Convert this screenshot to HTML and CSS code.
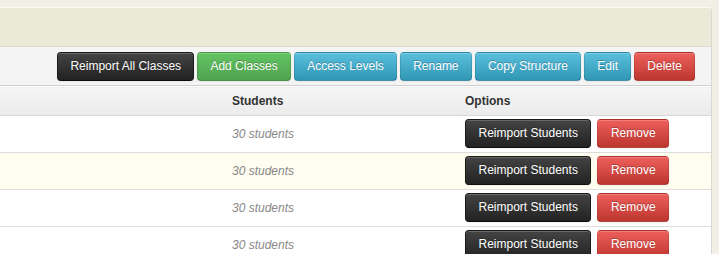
FILE: index.html
```html
<!DOCTYPE html>
<html>
<head>
<meta charset="utf-8">
<link rel="stylesheet" href="styles.css">
</head>
<body>
<div class="panel">
  <div class="panel-heading"></div>
  <div class="toolbar">
    <button class="btn btn-inverse">Reimport All Classes</button>
    <button class="btn btn-success">Add Classes</button>
    <button class="btn btn-info">Access Levels</button>
    <button class="btn btn-info">Rename</button>
    <button class="btn btn-info">Copy Structure</button>
    <button class="btn btn-info">Edit</button>
    <button class="btn btn-danger">Delete</button>
  </div>
  <table class="classes">
    <colgroup><col class="c1"><col class="c2"><col class="c3"></colgroup>
    <thead>
      <tr><th></th><th>Students</th><th>Options</th></tr>
    </thead>
    <tbody>
      <tr><td></td><td class="count">30 students</td><td><div class="opts"><button class="btn btn-inverse">Reimport Students</button><button class="btn btn-danger">Remove</button></div></td></tr>
      <tr class="hl"><td></td><td class="count">30 students</td><td><div class="opts"><button class="btn btn-inverse">Reimport Students</button><button class="btn btn-danger">Remove</button></div></td></tr>
      <tr><td></td><td class="count">30 students</td><td><div class="opts"><button class="btn btn-inverse">Reimport Students</button><button class="btn btn-danger">Remove</button></div></td></tr>
      <tr><td></td><td class="count">30 students</td><td><div class="opts"><button class="btn btn-inverse">Reimport Students</button><button class="btn btn-danger">Remove</button></div></td></tr>
    </tbody>
  </table>
</div>
</body>
</html>
```
FILE: styles.css
```css
html, body {
  margin: 0;
  padding: 0;
}
body {
  background: #f1efe6;
  font-family: "Liberation Sans", Arial, sans-serif;
  font-size: 12px;
  color: #333;
  padding-top: 7px;
  overflow: hidden;
  height: 254px;
  box-sizing: border-box;
}
.panel {
  width: 711px;
  background: #fff;
  border-top: 1px solid #fbfaf4;
  border-right: 1px solid #d9d9d2;
  border-top-right-radius: 4px;
  overflow: hidden;
}
.panel-heading {
  height: 38px;
  background: #ebe9d8;
  border-bottom: 1px solid #dcdbcc;
}
.toolbar {
  background: #f4f4f4;
  height: 39px;
  box-sizing: border-box;
  padding: 5px 16px 5px 0;
  text-align: right;
  border-bottom: 1px solid #cfcfcf;
  font-size: 12px;
}
.btn {
  display: inline-block;
  font-family: "Liberation Sans", Arial, sans-serif;
  font-size: 12px;
  line-height: 19px;
  height: 29px;
  box-sizing: border-box;
  padding: 4px 12px;
  margin: 0;
  color: #fff;
  text-shadow: 0 -1px 0 rgba(0,0,0,0.25);
  border: 1px solid rgba(0,0,0,0.1);
  border-bottom-color: rgba(0,0,0,0.25);
  border-radius: 4px;
  box-shadow: inset 0 1px 0 rgba(255,255,255,0.2), 0 1px 2px rgba(0,0,0,0.05);
  vertical-align: top;
}
.btn-inverse {
  background: linear-gradient(#444444, #222222);
  border-color: #1a1a1a #1a1a1a #0d0d0d;
}
.btn-success {
  background: linear-gradient(#62c462, #51a351);
}
.btn-info {
  background: linear-gradient(#5bc0de, #2f96b4);
}
.btn-danger {
  background: linear-gradient(#ee5f5b, #bd362f);
}
.classes {
  width: 711px;
  border-collapse: collapse;
  table-layout: fixed;
  border-top: 1px solid #fff;
}
.c1 { width: 224px; }
.c2 { width: 233px; }
.c3 { width: 254px; }
.classes th {
  height: 28px;
  padding: 0 8px;
  text-align: left;
  font-weight: bold;
  font-size: 12px;
  color: #333;
  background: linear-gradient(#f5f5f5, #ebebeb);
  border-bottom: 1px solid #d7d7d7;
  vertical-align: middle;
}
.classes td {
  padding: 3px 8px 4px;
  height: 29px;
  border-top: 1px solid #dddddd;
  vertical-align: middle;
}
.classes tbody tr:first-child td {
  border-top: none;
}
.classes tr.hl td {
  background: #fffdf0;
}
.count {
  font-style: italic;
  color: #888;
}
.opts {
  display: flex;
  gap: 6px;
}
.opts .btn {
  padding: 4px 12.5px;
}
```
